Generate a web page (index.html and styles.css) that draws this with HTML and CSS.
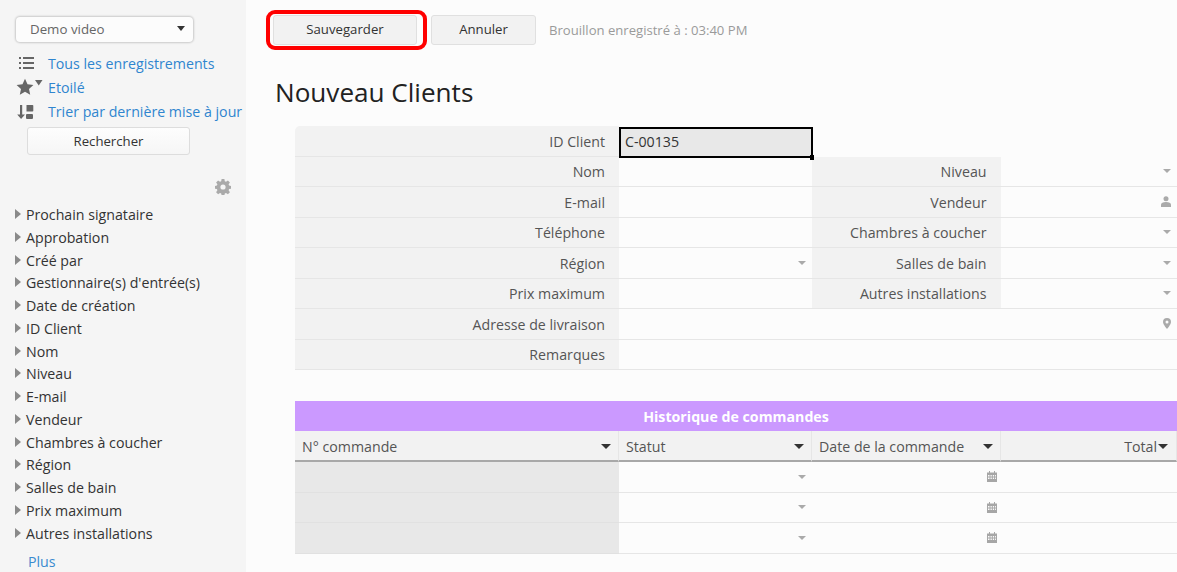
FILE: index.html
```html
<!DOCTYPE html>
<html lang="fr">
<head>
<meta charset="utf-8">
<title>Nouveau Clients</title>
<link rel="stylesheet" href="styles.css">
</head>
<body>
<div class="app">
  <aside class="sidebar">
    <div class="view-select"><span>Demo video</span><i class="caret dark"></i></div>
    <ul class="links">
      <li><svg class="ico" width="16" height="14" viewBox="0 0 16 14"><path fill="#666" d="M1 1h2v2H1zM5 1h11v2H5zM1 6h2v2H1zM5 6h11v2H5zM1 11h2v2H1zM5 11h11v2H5z"/></svg><a>Tous les enregistrements</a></li>
      <li class="star"><svg class="ico" width="28" height="18" viewBox="0 0 28 18"><path fill="#666" d="M9 .8l2.500 5.400 5.900.7-4.400 4 1.200 5.800L9 13.800l-5.200 2.900L5 10.900.6 6.900l5.900-.7z"/><path fill="#666" d="M19 2h7.500l-3.750 5.500z"/></svg><a>Etoilé</a></li>
      <li class="sort"><svg class="ico" width="18" height="16" viewBox="0 0 18 16"><path fill="#666" d="M4 1h2.200v9.500H9L5.100 15 1.200 10.500H4zM10.500 1h6a.8.8 0 0 1 .8.8v5a.8.8 0 0 1-.8.8h-6zM11 10h5a1 1 0 0 1 1 1v3a1 1 0 0 1-1 1h-5a1 1 0 0 1-1-1v-3a1 1 0 0 1 1-1z"/></svg><a>Trier par dernière mise à jour</a></li>
    </ul>
    <button class="search">Rechercher</button>
    <div class="gear-row">
      <svg width="16" height="16" viewBox="0 0 16 16"><path fill="#aaa" fill-rule="evenodd" d="M6.600 0h2.800l.4 2.200 1.200.5L12.900 1.400l2 2-1.300 1.900.5 1.200 2 .4v2.800l-2 .4-.5 1.200 1.300 1.900-2 2-1.900-1.300-1.200.5-.4 2H6.600l-.4-2-1.200-.5-1.900 1.300-2-2 1.300-1.900-.5-1.200-2-.4V6.900l2-.4.5-1.200-1.300-1.900 2-2L5 2.700l1.200-.5zM8 5.400a2.600 2.600 0 1 0 0 5.200 2.600 2.600 0 0 0 0-5.200z"/></svg>
    </div>
    <ul class="fields">
      <li>Prochain signataire</li>
      <li>Approbation</li>
      <li>Créé par</li>
      <li>Gestionnaire(s) d'entrée(s)</li>
      <li>Date de création</li>
      <li>ID Client</li>
      <li>Nom</li>
      <li>Niveau</li>
      <li>E-mail</li>
      <li>Vendeur</li>
      <li>Chambres à coucher</li>
      <li>Région</li>
      <li>Salles de bain</li>
      <li>Prix maximum</li>
      <li>Autres installations</li>
    </ul>
    <a class="more">Plus</a>
  </aside>

  <main class="main">
    <div class="toolbar">
      <div class="highlight"><button class="btn save">Sauvegarder</button></div>
      <button class="btn cancel">Annuler</button>
      <span class="draft">Brouillon enregistré à : 03:40 PM</span>
    </div>
    <h1>Nouveau Clients</h1>

    <section class="form">
      <div class="lbl first">ID Client</div>
      <div class="val selected">C-00135<i class="handle"></i></div>
      <div class="blank"></div>

      <div class="lbl">Nom</div><div class="val"></div>
      <div class="lbl">Niveau</div><div class="val"><i class="caret soft"></i></div>

      <div class="lbl">E-mail</div><div class="val"></div>
      <div class="lbl">Vendeur</div>
      <div class="val"><svg width="10" height="11" viewBox="0 0 10 11"><circle cx="5" cy="2.700" r="2.500" fill="#aaa"/><path fill="#aaa" d="M0 11V8.500C0 7 2 6 5 6s5 1 5 2.500V11z"/></svg></div>

      <div class="lbl">Téléphone</div><div class="val"></div>
      <div class="lbl">Chambres à coucher</div><div class="val"><i class="caret soft"></i></div>

      <div class="lbl">Région</div><div class="val"><i class="caret soft"></i></div>
      <div class="lbl">Salles de bain</div><div class="val"><i class="caret soft"></i></div>

      <div class="lbl">Prix maximum</div><div class="val"></div>
      <div class="lbl">Autres installations</div><div class="val"><i class="caret soft"></i></div>

      <div class="lbl">Adresse de livraison</div>
      <div class="val wide"><svg width="8" height="11" viewBox="0 0 8 11"><path fill="#aaa" fill-rule="evenodd" d="M4 0a4 4 0 0 1 4 4c0 2.500-4 7-4 7S0 6.500 0 4a4 4 0 0 1 4-4zm0 2.500a1.500 1.500 0 1 0 0 3 1.500 1.500 0 0 0 0-3z"/></svg></div>

      <div class="lbl">Remarques</div><div class="val wide"></div>
    </section>

    <section class="subtable">
      <div class="sub-title">Historique de commandes</div>
      <div class="sub-head">N° commande<i class="caret dark"></i></div>
      <div class="sub-head">Statut<i class="caret dark"></i></div>
      <div class="sub-head">Date de la commande<i class="caret dark"></i></div>
      <div class="sub-head total">Total<i class="caret dark"></i></div>

      <div class="cell locked"></div>
      <div class="cell"><i class="caret soft"></i></div>
      <div class="cell"><svg class="cal" width="10" height="11" viewBox="0 0 10 11"><use href="#cal"/></svg></div>
      <div class="cell"></div>

      <div class="cell locked"></div>
      <div class="cell"><i class="caret soft"></i></div>
      <div class="cell"><svg class="cal" width="10" height="11" viewBox="0 0 10 11"><use href="#cal"/></svg></div>
      <div class="cell"></div>

      <div class="cell locked"></div>
      <div class="cell"><i class="caret soft"></i></div>
      <div class="cell"><svg class="cal" width="10" height="11" viewBox="0 0 10 11"><use href="#cal"/></svg></div>
      <div class="cell"></div>
    </section>
  </main>
</div>
<svg width="0" height="0" class="defs"><defs><path id="cal" fill="#a6a6a6" fill-rule="evenodd" d="M2 0h1v1.500h4V0h1v1.500h2V11H0V1.500h2zM1 4v1.500h1.500V4zm2.500 0v1.500h1.300V4zm2.300 0v1.500h1.300V4zm2.300 0v1.500H9V4zM1 6.500V8h1.500V6.500zm2.500 0V8h1.300V6.500zm2.300 0V8h1.300V6.500zm2.300 0V8H9V6.500z"/></defs></svg>
</body>
</html>
```
FILE: styles.css
```css
* { box-sizing: border-box; }
html, body { margin: 0; height: 572px; overflow: hidden; }
body { font-family: "Open Sans", "Liberation Sans", sans-serif; font-size: 14.200px; color: #555; background: #fcfcfc; }
.app { display: flex; height: 572px; }
ul { list-style: none; margin: 0; padding: 0; }
.defs { display: block; height: 0; }

.caret { display: inline-block; width: 0; height: 0; border-style: solid; border-color: transparent; border-width: 5px 5px 0; }
.caret.dark { border-top-color: #333; }
.caret.soft { border-width: 4px 4px 0; border-top-color: #aaa; }

.sidebar { width: 246px; flex: none; background: #f5f5f5; padding: 17px 0 0 0; }
.view-select { margin-left: 16px; width: 177px; height: 25px; padding: 0 8px 2px 14px; display: flex; align-items: center; justify-content: space-between; background: #fcfcfc; border-radius: 4px; box-shadow: 0 0 2px 1px rgba(0,0,0,.18); color: #666; font-size: 13.300px; }
.view-select .caret { border-width: 5px 4.500px 0; }
.links { margin-top: 9px; }
.links li { height: 24px; display: flex; align-items: center; position: relative; padding-left: 48px; white-space: nowrap; }
.links a { color: #2f85cf; }
.links .ico { position: absolute; left: 18px; top: 5px; }
.links .star .ico { left: 16px; top: 3px; }
.links .sort .ico { left: 16px; }
.search { display: block; margin: 4px 0 0 27px; width: 163px; height: 28px; background: linear-gradient(#fdfdfd, #f6f6f6); border: 1px solid #ddd; border-radius: 3px; font: inherit; font-size: 13.200px; color: #333; padding: 0; }
.gear-row { display: flex; justify-content: flex-end; padding-right: 15px; margin-top: 24px; height: 16px; }
.fields { margin-top: 9px; }
.fields li { height: 22.770px; line-height: 22.770px; padding-left: 26px; color: #333; position: relative; white-space: nowrap; }
.fields li::before { content: ""; position: absolute; left: 15px; top: 5px; border-style: solid; border-width: 5.500px 0 5.500px 6.500px; border-color: transparent transparent transparent #8a8a8a; }
.more { display: block; margin: 7px 0 0 28px; color: #3a8bd0; }

.main { flex: 1; min-width: 0; padding: 10px 0 0 20px; }
.toolbar { display: flex; align-items: center; height: 40px; }
.highlight { border: 4px solid #f00; border-radius: 9px; padding: 1px; width: 161px; height: 40px; }
.btn { font: inherit; font-size: 13.200px; color: #333; background: #f2f2f2; border: 1px solid #e0e0e0; border-radius: 3px; padding: 0 0 2px; }
.save { width: 144px; height: 30px; display: block; margin-left: 2px; }
.cancel { width: 105px; height: 30px; margin-left: 4px; }
.draft { margin-left: 13px; color: #9a9a9a; font-size: 13.100px; }
h1 { margin: 24px 0 0 9px; font-size: 26.100px; font-weight: 400; line-height: 36px; color: #222; }

.form { margin: 16px 0 0 29px; display: grid; grid-template-columns: 324px 193px 188.500px 176.500px; grid-auto-rows: 30.500px; }
.lbl { background: #f2f2f2; border-bottom: 1px solid #e6e6e6; text-align: right; padding-right: 14px; padding-top: .5px; line-height: 30px; color: #555; white-space: nowrap; }
.lbl.first { border-top-left-radius: 5px; }
.val { border-bottom: 1px solid #e6e6e6; display: flex; align-items: center; justify-content: flex-end; padding-right: 6px; position: relative; }
.val.wide { grid-column: span 3; }
.blank { grid-column: span 2; }
.selected { justify-content: flex-start; background: #e8e8e8; border: 2px solid #000; padding: 0 0 2px 4px; color: #333; z-index: 1; margin: 1px -1px -1.500px 0; }
.handle { position: absolute; right: -3px; bottom: -4px; width: 4px; height: 5px; background: #000; }

.subtable { margin: 31px 0 0 29px; display: grid; grid-template-columns: 324px 193px 188.500px 176.500px; }
.sub-title { grid-column: 1 / -1; height: 30px; background: #cb99ff; color: #fff; font-weight: 700; text-align: center; line-height: 32px; }
.sub-head { height: 31px; background: #f2f2f2; border-bottom: 2px solid #a8a8a8; border-right: 1px solid #e6e6e6; display: flex; align-items: center; justify-content: space-between; padding: 2px 7px 0 7px; color: #555; white-space: nowrap; }
.sub-head.total { justify-content: flex-end; padding-right: 8px; }
.sub-head.total .caret { margin-left: 1px; }
.cell { height: 30.600px; border-bottom: 1px solid #e6e6e6; display: flex; align-items: center; justify-content: flex-end; padding-right: 6px; }
.cell.locked { background: #e8e8e8; border-bottom-color: #e1e1e1; }
.cal { margin-right: -2px; }
```
